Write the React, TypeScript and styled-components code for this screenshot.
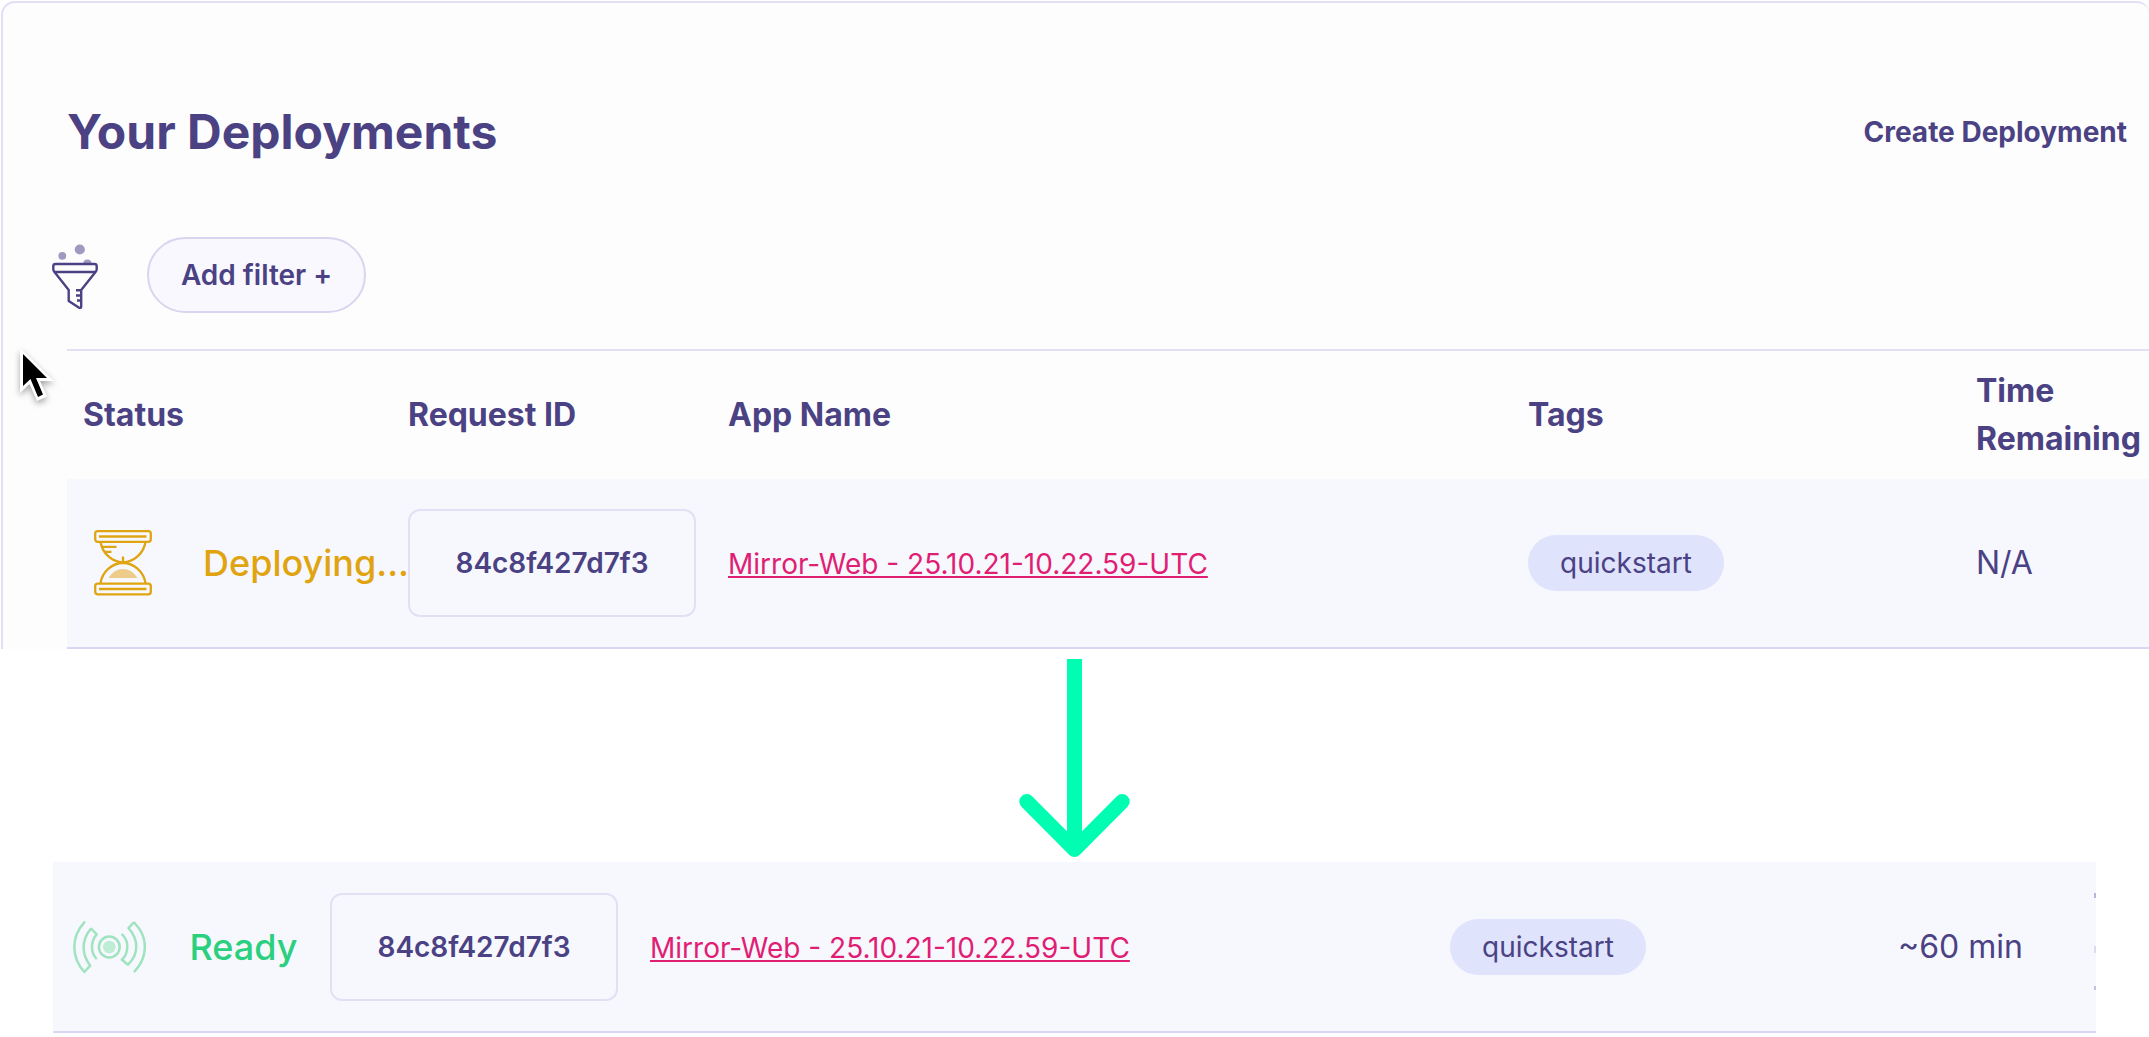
import React from 'react';
import styled, { createGlobalStyle } from 'styled-components';

const ink = '#4b4284';
const line = '#e3e0f6';

const GlobalStyle = createGlobalStyle`
  * { box-sizing: border-box; }
  html, body { margin: 0; background: #fff; }
  body { font-family: Inter, "Liberation Sans", sans-serif; color: ${ink}; overflow: hidden; }
`;

const Page = styled.main`
  width: 2149px;
  height: 1037px;
  overflow: hidden;
  padding-top: 1px;
  background: #fff;
`;

const Panel = styled.section`
  position: relative;
  height: 648px;
  margin-left: 1px;
  padding-left: 64px;
  background: #fdfdfe;
  border-top: 2px solid ${line};
  border-left: 2px solid ${line};
  border-radius: 14px 12px 0 0;
`;

const Header = styled.header`
  display: flex;
  align-items: center;
  justify-content: space-between;
  height: 58px;
  margin-top: 100px;
  padding-right: 22px;
`;

const Title = styled.h1`
  margin: 0;
  font-size: 48px;
  line-height: 58px;
  font-weight: 700;
`;

const CreateLink = styled.a`
  font-size: 28px;
  line-height: 34px;
  font-weight: 700;
`;

const Filters = styled.div`
  display: flex;
  align-items: center;
  gap: 49px;
  height: 76px;
  margin: 76px 0 36px -17px;
`;

const AddFilter = styled.button`
  width: 219px;
  height: 76px;
  border: 2px solid #dad5ef;
  border-radius: 38px;
  background: #f8f8fe;
  color: ${ink};
  font: 600 28px/34px Inter, "Liberation Sans", sans-serif;
  padding: 0;
`;

const Table = styled.div`
  border-top: 2px solid ${line};
`;

const Row = styled.div<{ $first: number }>`
  display: grid;
  grid-template-columns: ${p => p.$first}px 320px 800px 448px 1fr;
  align-items: center;
`;

const HeadRow = styled(Row)`
  height: 128px;
  font-size: 32px;
  line-height: 48px;
  font-weight: 700;
`;

const DataRow = styled(Row)`
  height: 170px;
  background: #f7f8fe;
  border-bottom: 2px solid #dad5f2;
`;

const ReadyRow = styled(DataRow)`
  position: relative;
  height: 171px;
  width: 2043px;
  margin: 1px 0 0 53px;
`;

const Head = styled.div`
  &:first-child {
    padding-left: 16px;
  }
`;

const Status = styled.div<{ $color: string; $inset: number; $gap: number }>`
  display: flex;
  align-items: center;
  gap: ${p => p.$gap}px;
  padding-left: ${p => p.$inset}px;
  color: ${p => p.$color};
  font-size: 36px;
  line-height: 44px;
  font-weight: 500;
  white-space: nowrap;

  svg {
    flex: none;
  }
`;

const RequestId = styled.div`
  display: flex;
  align-items: center;
  justify-content: center;
  width: 288px;
  height: 108px;
  border: 2px solid ${line};
  border-radius: 12px;
  font-size: 28px;
  font-weight: 600;
`;

const LinkCell = styled.div`
  padding-top: 2px;
`;

const AppLink = styled.a`
  color: #e01e74;
  font-size: 28px;
  line-height: 34px;
  text-decoration: underline;
  text-decoration-thickness: 2px;
  text-underline-offset: 2px;
  text-decoration-skip-ink: none;
`;

const Tag = styled.span`
  display: inline-flex;
  align-items: center;
  justify-content: center;
  width: 196px;
  height: 56px;
  border-radius: 28px;
  background: #dfe3fc;
  font-size: 28px;
`;

const Time = styled.div`
  font-size: 32px;
  line-height: 40px;
`;

const ArrowHolder = styled.div`
  display: flex;
  justify-content: center;
  height: 212px;
  padding-top: 10px;
`;

const Cursor = styled.svg`
  position: absolute;
  left: 13px;
  top: 340px;
  filter: drop-shadow(0 3px 3px rgba(0, 0, 0, 0.35));
`;

const Sliver = styled.i<{ $top: number; $size: number; $color: string }>`
  position: absolute;
  right: 0;
  top: ${p => p.$top}px;
  width: 2px;
  height: ${p => p.$size}px;
  background: ${p => p.$color};
`;

const FunnelIcon = () => (
  <svg width="48" height="68" viewBox="0 0 48 68" fill="none" stroke={ink} strokeWidth="2.400" strokeLinejoin="round">
    <g fill="#a099c2" stroke="none">
      <circle cx="12.3" cy="14.800" r="3.9" />
      <circle cx="29.8" cy="8.500" r="5.1" />
      <path d="M33.3 22.500a4.1 4.1 0 0 1 8.2 0z" />
    </g>
    <path d="M5.5 23h39q2.2 0 2.2 2.2v3q0 1.400-1.200 2.800H4.500q-1.200-1.400-1.200-2.800v-3q0-2.200 2.200-2.200z" />
    <path d="M4.500 31L18.700 49V60L29.500 67Q31.200 67.500 31.200 65.500V49L45.500 31" />
    <path d="M31.200 49.300h-5.200M31.200 54.500h-5.200M31.200 59.500h-4.200" />
  </svg>
);

const HourglassIcon = () => (
  <svg width="58" height="68" viewBox="0 0 58 68" fill="none" stroke="#e0a411" strokeWidth="2.300">
    <rect x="1.200" y="2.200" width="55.600" height="10.600" rx="2.500" />
    <rect x="1.200" y="54.700" width="55.600" height="10.600" rx="2.500" />
    <path d="M5 7.500H52.500M5 60H52.500" />
    <path d="M6.500 12.500C8 24 18 33.300 29 33.300S50 24 51.500 12.500M6.500 54.500C8 43 18 34 29 34S50 43 51.500 54.500M29 27.500V33.500" />
    <path d="M8 17.800H22.500M10.500 22.800H17.500" />
    <path d="M14.500 49Q20 40 29 40T43.500 49z" fill="#edcb88" stroke="none" />
  </svg>
);

const SignalIcon = () => (
  <svg width="74" height="60" viewBox="0 0 74 60" fill="none" stroke="#9fe3bf" strokeWidth="2.500" strokeLinecap="round" strokeLinejoin="round">
    <circle cx="37.300" cy="30" r="6.300" fill="#bdeed5" stroke="none" />
    <circle cx="37.300" cy="30" r="10.400" />
    <path d="M12.300 5.300C-1 20-1 40 12.300 55L18.300 48.700C9.200 37 9.400 23 18.700 12Q19.500 11.500 20.500 13L24.700 17.300C18.500 24 18.500 35 24 41.300" />
    <path d="M62.700 54.300C76.200 40 76.200 20 63 6.500Q62 5 60.700 6.500L56.500 11C67 23 67 37 56 47.700L50 42.700" />
    <path d="M50 42.700C57 36 57 24 50.300 17.700" />
  </svg>
);

const DownArrow = () => (
  <svg width="111" height="200" viewBox="0 0 111 200" fill="none" stroke="#00fdb2" strokeWidth="15">
    <path d="M55.500 0V188" />
    <path d="M7.800 142.500L55.500 190.500L103.200 142.500" strokeLinecap="round" strokeLinejoin="round" />
  </svg>
);

const Pointer = () => (
  <Cursor width="50" height="60" viewBox="0 0 50 60">
    <path d="M4 5V50L13.500 41L21 58L31 53.500L24 38H38z" fill="#fff" />
    <path d="M7 11V43L14.500 36L22 54L27 51.500L20 35H31z" fill="#000" />
  </Cursor>
);

export default function App() {
  return (
    <Page>
      <GlobalStyle />
      <Panel>
        <Header>
          <Title>Your Deployments</Title>
          <CreateLink>Create Deployment</CreateLink>
        </Header>
        <Filters>
          <FunnelIcon />
          <AddFilter>Add filter +</AddFilter>
        </Filters>
        <Table>
          <HeadRow $first={341}>
            <Head>Status</Head>
            <Head>Request ID</Head>
            <Head>App Name</Head>
            <Head>Tags</Head>
            <Head>Time Remaining</Head>
          </HeadRow>
          <DataRow $first={341}>
            <Status $color="#e0a411" $inset={27} $gap={51}>
              <HourglassIcon />
              Deploying...
            </Status>
            <RequestId>84c8f427d7f3</RequestId>
            <LinkCell><AppLink>Mirror-Web - 25.10.21-10.22.59-UTC</AppLink></LinkCell>
            <div><Tag>quickstart</Tag></div>
            <Time>N/A</Time>
          </DataRow>
        </Table>
        <Pointer />
      </Panel>
      <ArrowHolder>
        <DownArrow />
      </ArrowHolder>
      <ReadyRow $first={277}>
        <Status $color="#2bd07e" $inset={19} $gap={43.5}>
          <SignalIcon />
          Ready
        </Status>
        <RequestId>84c8f427d7f3</RequestId>
        <LinkCell><AppLink>Mirror-Web - 25.10.21-10.22.59-UTC</AppLink></LinkCell>
        <div><Tag>quickstart</Tag></div>
        <Time>~60 min</Time>
        <Sliver $top={31} $size={5} $color="#b9b5d6" />
        <Sliver $top={84} $size={7} $color="#dcdaf0" />
        <Sliver $top={124} $size={4} $color="#c5c2dd" />
      </ReadyRow>
    </Page>
  );
}
